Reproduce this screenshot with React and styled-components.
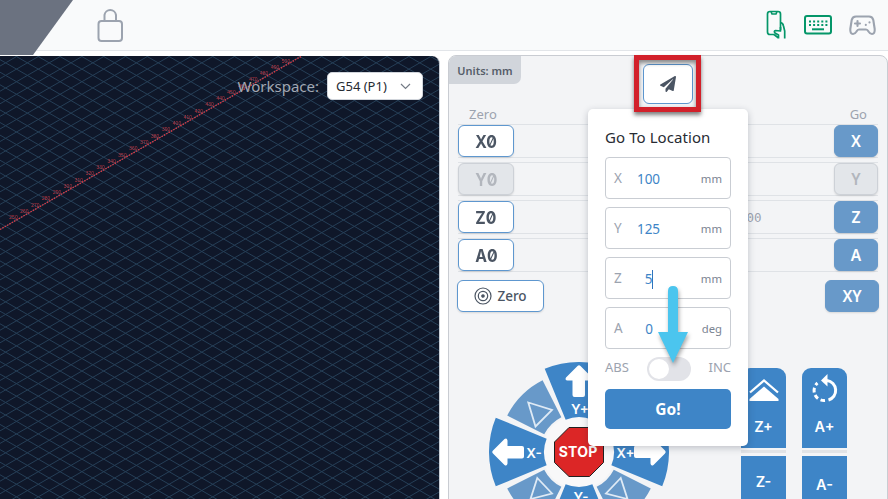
import React from "react";
import styled, { createGlobalStyle, css } from "styled-components";
import { FaPaperPlane } from "react-icons/fa";

const GlobalStyle = createGlobalStyle`
  * { box-sizing: border-box; }
  body {
    margin: 0;
    background: #fff;
    font-family: "Noto Sans", "Open Sans", sans-serif;
    overflow: hidden;
  }
  svg { display: block; }
`;

const Page = styled.div`
  position: relative;
  width: 888px;
  height: 499px;
  overflow: hidden;
  display: flex;
  flex-direction: column;
  background: #fff;
`;

const Header = styled.header`
  height: 51px;
  flex: none;
  display: flex;
  justify-content: space-between;
  background: #f9fafb;
  border-bottom: 1px solid #e2e5e9;
`;

const LogoCorner = styled.div`
  width: 73px;
  height: 55px;
  background: #6b7280;
  clip-path: polygon(0 0, 100% 0, 33px 100%, 0 100%);
`;

const HeaderLeft = styled.div`
  display: flex;
  gap: 24px;
`;

const LockIcon = styled.svg`
  margin-top: 8px;
`;

const HeaderTools = styled.div`
  display: flex;
  align-items: center;
  gap: 17px;
  padding-right: 12px;
  svg:first-child { margin-right: 1px; }
`;

const Main = styled.main`
  flex: 1;
  display: flex;
  gap: 8px;
  padding-top: 4px;
`;

const Visualizer = styled.section`
  width: 440px;
  height: 444px;
  margin-top: 1px;
  display: grid;
  border-radius: 0 8px 0 0;
  border-right: 1px solid #c9ced6;
  background: #0f1729;
  overflow: hidden;
  > * { grid-area: 1 / 1; }
`;

const WorkspaceBar = styled.div`
  display: flex;
  align-items: center;
  justify-content: flex-end;
  height: 28px;
  margin: 16px 17px 0 0;
  gap: 8px;
  color: #a2a8b3;
  font-size: 15px;
`;

const Select = styled.div`
  width: 96px;
  height: 28px;
  padding: 0 11px 0 8px;
  display: flex;
  align-items: center;
  justify-content: space-between;
  background: #fff;
  border: 1px solid #d1d5db;
  border-radius: 5px;
  color: #262b33;
  font-size: 13px;
`;

const ControlPanel = styled.section`
  flex: 1;
  height: 460px;
  border: 1px solid #c9ccd2;
  border-radius: 8px;
  background: #f3f4f6;
`;

const PanelTop = styled.div`
  display: flex;
  align-items: flex-start;
  height: 50px;
`;

const UnitsTag = styled.div`
  width: 72px;
  height: 28px;
  display: flex;
  align-items: center;
  justify-content: center;
  background: #d1d5db;
  border-radius: 7px 0 7px 0;
  color: #555d69;
  font-size: 11px;
  font-weight: 600;
`;

const LocationButton = styled.div`
  width: 50px;
  height: 40px;
  margin: 8px 0 0 122px;
  display: flex;
  align-items: center;
  justify-content: center;
  background: #fff;
  border: 1px solid #5e97cf;
  border-radius: 6px;
  color: #4b5563;
  font-size: 16px;
`;

const ColumnLabels = styled.div`
  display: flex;
  justify-content: space-between;
  height: 18px;
  padding: 0 20px;
  color: #9ca3af;
  font-size: 13px;
  line-height: 17px;
`;

const AxisList = styled.div`
  display: flex;
  flex-direction: column;
  gap: 4px;
  padding: 0 9px;
`;

const AxisRow = styled.div`
  height: 34px;
  display: flex;
  align-items: center;
  justify-content: space-between;
  border: solid #dfe2e6;
  border-width: 1px 0;
`;

const Readout = styled.span`
  margin: 0 0 0 160px;
  color: #9ca3af;
  font: 12.5px "DejaVu Sans Mono", monospace;
`;

const buttonBase = css`
  height: 32px;
  display: flex;
  align-items: center;
  justify-content: center;
  border-radius: 6px;
  box-shadow: 0 1px 2px rgba(0, 0, 0, 0.12);
`;

const ZeroButton = styled.div`
  ${buttonBase}
  width: 56px;
  background: ${(p) => (p.$off ? "#e3e6ea" : "#fff")};
  border: 1px solid ${(p) => (p.$off ? "#cdd1d7" : "#5e97cf")};
  color: ${(p) => (p.$off ? "#b2b6bd" : "#4b5563")};
  font: bold 17.5px "Inter", sans-serif;
  font-feature-settings: "zero" 1;
  > span { transform: scaleX(0.9); }
`;

const GoButton = styled.div`
  ${buttonBase}
  width: ${(p) => p.$width || 44}px;
  background: ${(p) => (p.$off ? "#e3e6ea" : "#6899c9")};
  border: 1px solid ${(p) => (p.$off ? "#cdd1d7" : "#6899c9")};
  color: ${(p) => (p.$off ? "#b2b6bd" : "#fff")};
  font-size: 15.5px;
  font-weight: 600;
`;

const ActionRow = styled.div`
  display: flex;
  justify-content: space-between;
  padding: 8px 8px 0;
`;

const ZeroAll = styled.div`
  ${buttonBase}
  width: 87px;
  gap: 5px;
  background: #fff;
  border: 1px solid #5e97cf;
  color: #4b5563;
  font-size: 13.5px;
  font-weight: 500;
`;

const JogArea = styled.div`
  display: flex;
  align-items: flex-start;
  padding: 50px 0 0 40px;
`;

const JogColumns = styled.div`
  display: flex;
  gap: 16px;
  margin: 6px 0 0 72px;
`;

const JogColumn = styled.div`
  width: 45px;
  display: flex;
  flex-direction: column;
`;

const JogDivider = styled.div`
  height: 3px;
  margin: 2px 0 3px;
  background: #e1e3e6;
`;

const JogKey = styled.div`
  height: 80px;
  display: flex;
  flex-direction: column;
  align-items: center;
  padding-top: ${(p) => p.$pad}px;
  background: #3e85c7;
  border-radius: ${(p) => (p.$top ? "9px 9px 0 0" : "0 0 9px 9px")};
  color: #fff;
  font: 600 14.5px/18px "Inter", sans-serif;
  svg + span { margin-top: 14px; }
`;

const Popover = styled.section`
  position: absolute;
  left: 588px;
  top: 109px;
  width: 160px;
  height: 337px;
  padding: 17px 17px 16px;
  display: flex;
  flex-direction: column;
  background: #fff;
  border-radius: 5px;
  box-shadow: 0 2px 7px rgba(30, 40, 60, 0.25);
`;

const PopoverTitle = styled.h2`
  margin: 0 0 8px;
  height: 23px;
  color: #272b33;
  font-size: 15px;
  font-weight: 400;
  line-height: 22px;
  letter-spacing: 0.08px;
  white-space: nowrap;
`;

const Fields = styled.div`
  display: flex;
  flex-direction: column;
  gap: 8px;
`;

const Field = styled.div`
  height: 42px;
  padding: 0 8px;
  display: grid;
  grid-template-columns: 12px 44px 1fr;
  align-items: center;
  border: 1px solid #c9cdd3;
  border-radius: 4px;
  color: #9ca3af;
  font-size: 13.5px;
`;

const FieldValue = styled.span`
  display: flex;
  align-items: center;
  justify-content: center;
  padding-top: 2px;
  padding-left: ${(p) => (p.$short ? 5 : 3)}px;
  margin-right: ${(p) => (p.$short ? 3 : 2)}px;
  color: #3e85c7;
`;

const Caret = styled.i`
  width: 1px;
  height: 19px;
  background: #3074bd;
`;

const FieldUnit = styled.span`
  padding-top: 1px;
  color: #7b8492;
  font-size: 11.3px;
  text-align: right;
`;

const ModeRow = styled.div`
  height: 24px;
  margin: 8px 0;
  display: flex;
  align-items: center;
  justify-content: space-between;
  color: #9ca3af;
  font-size: 13px;
  > span { margin-top: -4px; }
`;

const Toggle = styled.div`
  width: 44px;
  height: 24px;
  padding: 2px;
  margin-left: -6px;
  margin-right: -6px;
  border-radius: 12px;
  background: #e2e3e8;
`;

const Knob = styled.div`
  width: 20px;
  height: 20px;
  border-radius: 50%;
  background: #fff;
`;

const Submit = styled.div`
  height: 40px;
  display: flex;
  align-items: center;
  justify-content: center;
  border-radius: 5px;
  background: #3e85c7;
  color: #fff;
  font-size: 15.5px;
  font-weight: 700;
`;

const Highlight = styled.div`
  position: absolute;
  left: 634px;
  top: 55px;
  width: 67px;
  height: 57px;
  border: 5px solid #d2202a;
  box-shadow: 0 3px 4px rgba(0, 0, 0, 0.5), inset 0 3px 4px rgba(0, 0, 0, 0.45);
`;

const PointerArrow = styled.svg`
  position: absolute;
  left: 650px;
  top: 280px;
  filter: drop-shadow(1px 3px 2px rgba(0, 0, 0, 0.35));
`;

const LABELS = Array.from({ length: 26 }, (_, i) => 250 + i * 10);

const STEP = 12.58;
const SLOPE = STEP / 21.8;
const NODE = { x: 38.3, y: 25.7 };
const GRID_PATH = Array.from({ length: 62 }, (_, i) => {
  const rising = NODE.y + NODE.x * SLOPE + (i - 4) * STEP;
  const falling = NODE.y - NODE.x * SLOPE + (i - 22) * STEP;
  return (
    `M0 ${rising.toFixed(2)}L440 ${(rising - 440 * SLOPE).toFixed(2)}` +
    `M0 ${falling.toFixed(2)}L440 ${(falling + 440 * SLOPE).toFixed(2)}`
  );
}).join("");

function ToolpathGrid() {
  return (
    <svg width="440" height="444">
      <path d={GRID_PATH} stroke="#263f57" strokeWidth="1" />
      <path d="M0 173.5L302 0" stroke="#df3b45" strokeWidth="1.3" strokeDasharray="1.5 1.2" />
      <g fill="#d83c46" fontSize="5" fontFamily="Liberation Sans, sans-serif" opacity="0.85">
        {LABELS.map((v) => {
          const x = 286 - (500 - v) * 1.09;
          return <text key={v} x={x} y={174 - x * 0.575 - 3} textAnchor="middle">{v}</text>;
        })}
      </g>
    </svg>
  );
}

const point = (r, deg) => {
  const a = (deg * Math.PI) / 180;
  return `${(90 + r * Math.cos(a)).toFixed(2)} ${(90 + r * Math.sin(a)).toFixed(2)}`;
};
const wedge = (mid, half, r1, r2) =>
  `M${point(r1, mid - half)}L${point(r2, mid - half)}A${r2} ${r2} 0 0 1 ${point(r2, mid + half)}L${point(r1, mid + half)}A${r1} ${r1} 0 0 0 ${point(r1, mid - half)}Z`;

function JogWheel() {
  return (
    <svg width="180" height="180" viewBox="0 0 180 180">
      <circle cx="90" cy="90" r="37" fill="#f8f8f9" />
      {[0, 90, 180, 270].map((a) => (
        <g key={a}>
          <path d={wedge(a, 22.4, 35, 90)} fill="#3e85c7" />
          <path d={wedge(a + 45, 18.1, 39, 80.5)} fill="#6899c9" />
        </g>
      ))}
      {[0, 90, 180, 270].map((a) => (
        <path
          key={a}
          d="M4 88.500L15.500 77Q18 75.500 18.500 78.500V84H33Q35 84 35 86V94.500Q35 96.500 33 96.500H18.500V101.500Q18 104.500 15.500 103L4 91.500Q2.500 90 4 88.500Z"
          transform={`rotate(${a} 90 90)`}
          fill="#fff"
        />
      ))}
      <g fill="none" stroke="#dfeaf5" strokeWidth="1.8">
        <path d="M39.300 40.500L63 48L46.500 64.500Z" />
        <path d="M140.700 40.500L117 48L133.500 64.500Z" />
        <path d="M48.300 116L63 131.500L41.500 137Z" />
        <path d="M131.700 116L117 131.500L138.500 137Z" />
      </g>
      <path d="M80 65.500H100.500L114.500 80V100.500L100.500 114.500H80L65.500 100.500V80Z" fill="#dc2626" stroke="#202020" />
      <g fill="#fff" fontFamily="Inter, sans-serif" fontWeight="600" fontSize="13.500" textAnchor="middle">
        <text x="89" y="95" fontSize="14" fontWeight="700" textLength="38.500">STOP</text>
        <text x="91" y="52">Y+</text>
        <text x="45" y="96">X-</text>
        <text x="136.500" y="96">X+</text>
        <text x="92" y="140">Y-</text>
      </g>
    </svg>
  );
}

function RotateIcon() {
  return (
    <svg width="30" height="30" viewBox="-1 0 30 30" fill="none" stroke="#fff" strokeWidth="3">
      <path d="M16 6.500A10 10 0 0 1 17.500 26" />
      <path d="M14 26.500A10 10 0 0 1 6.500 9" strokeDasharray="4.500 2.800" />
      <path d="M10 6.500L16.500 0V12.500Z" fill="#fff" stroke="none" />
    </svg>
  );
}

function RaiseIcon() {
  return (
    <svg width="30" height="30" viewBox="0 0 30 30">
      <path d="M1 18.500L15 6.500L29 18.500" fill="none" stroke="#fff" strokeWidth="2.300" />
      <path d="M15 12.500L29.500 25V27H0.500V25Z" fill="#fff" />
    </svg>
  );
}

const AXES = ["X", "Y", "Z", "A"];
const TARGETS = [["X", "100", "mm"], ["Y", "125", "mm"], ["Z", "5", "mm"], ["A", "0", "deg"]];

export default function App() {
  return (
    <Page>
      <GlobalStyle />
      <Header>
        <HeaderLeft>
          <LogoCorner />
          <LockIcon width="26" height="35" fill="none" stroke="#9ca3af" strokeWidth="2">
            <rect x="1.500" y="13" width="23.500" height="20" rx="3" />
            <path d="M7.500 13V7A5.800 5.800 0 0 1 19 7V13" />
          </LockIcon>
        </HeaderLeft>
        <HeaderTools>
          <svg width="20" height="30" viewBox="0 0 20 30" fill="none" stroke="#059669" strokeWidth="1.700" strokeLinejoin="round">
            <path d="M14.500 20V4Q14.500 1.500 12 1.500H4Q1.500 1.500 1.500 4V22Q1.500 24.500 4 24.500H8" />
            <path d="M5 1.500L6 4H10L11 1.500" />
            <path d="M14.500 12.500Q17 13 17.500 16L18.700 21V28.500" />
            <path d="M14.500 17V21L9.500 20.500Q7.500 21 9 23L12.500 25V28.500M8 24.500L12.500 28" />
          </svg>
          <svg width="28" height="20" viewBox="0 0 28 20" fill="none" stroke="#059669" strokeWidth="2">
            <rect x="1" y="1" width="26" height="17.500" rx="2" />
            <path d="M5 6.500H24M5 10H24" strokeDasharray="2 2.100" />
            <path d="M8 14.300H20" />
          </svg>
          <svg width="27" height="21" viewBox="0 0 27 21" fill="none" stroke="#9ca3af" strokeWidth="2.100" strokeLinecap="round" strokeLinejoin="round">
            <path d="M7 1.500H20Q23.500 1.500 24.300 5L25.700 14Q26 19 23 19Q21 19 19.500 16.500Q18.500 14.500 17 14.500H10Q8.500 14.500 7.500 16.500Q6 19 4 19Q1 19 1.300 14L2.700 5Q3.500 1.500 7 1.500Z" />
            <path d="M8.500 6V11M6 8.500H11M20.500 7.300V7.400M16.800 9.800V9.900" />
          </svg>
        </HeaderTools>
      </Header>

      <Main>
        <Visualizer>
          <ToolpathGrid />
          <WorkspaceBar>
            <span>Workspace:</span>
            <Select>
              <span>G54 (P1)</span>
              <svg width="11" height="7" fill="none" stroke="#747b86" strokeWidth="1.200">
                <path d="M1 1L5.500 5.500L10 1" />
              </svg>
            </Select>
          </WorkspaceBar>
        </Visualizer>

        <ControlPanel>
          <PanelTop>
            <UnitsTag>Units: mm</UnitsTag>
            <LocationButton>
              <FaPaperPlane />
            </LocationButton>
          </PanelTop>
          <ColumnLabels>
            <span>Zero</span>
            <span>Go</span>
          </ColumnLabels>
          <AxisList>
            {AXES.map((axis) => (
              <AxisRow key={axis}>
                <ZeroButton $off={axis === "Y"}><span>{axis}0</span></ZeroButton>
                {axis === "Z" && <Readout>00</Readout>}
                <GoButton $off={axis === "Y"}>{axis}</GoButton>
              </AxisRow>
            ))}
          </AxisList>
          <ActionRow>
            <ZeroAll>
              <svg width="18" height="18" viewBox="0 0 18 18" fill="none" stroke="#4b5563" strokeWidth="1.200">
                <circle cx="9" cy="9" r="8" />
                <circle cx="9" cy="9" r="4.700" />
                <circle cx="9" cy="9" r="1.200" fill="#4b5563" />
              </svg>
              <span>Zero</span>
            </ZeroAll>
            <GoButton $width={54}>XY</GoButton>
          </ActionRow>
          <JogArea>
            <JogWheel />
            <JogColumns>
              <JogColumn>
                <JogKey $top $pad={6}><RaiseIcon /><span>Z+</span></JogKey>
                <JogDivider />
                <JogKey $pad={17}>Z-</JogKey>
              </JogColumn>
              <JogColumn>
                <JogKey $top $pad={6}><RotateIcon /><span>A+</span></JogKey>
                <JogDivider />
                <JogKey $pad={20}>A-</JogKey>
              </JogColumn>
            </JogColumns>
          </JogArea>
        </ControlPanel>
      </Main>

      <Popover>
        <PopoverTitle>Go To Location</PopoverTitle>
        <Fields>
          {TARGETS.map(([axis, value, unit]) => (
            <Field key={axis}>
              <span>{axis}</span>
              <FieldValue $short={value.length === 1}>
                {value}
                {axis === "Z" && <Caret />}
              </FieldValue>
              <FieldUnit>{unit}</FieldUnit>
            </Field>
          ))}
        </Fields>
        <ModeRow>
          <span>ABS</span>
          <Toggle><Knob /></Toggle>
          <span>INC</span>
        </ModeRow>
        <Submit>Go!</Submit>
      </Popover>

      <Highlight />
      <PointerArrow width="46" height="90">
        <path d="M18 11Q18 6 23 6Q28 6 28 11V52H38L23 83L8 52H18Z" fill="#4bc5ee" />
      </PointerArrow>
    </Page>
  );
}
